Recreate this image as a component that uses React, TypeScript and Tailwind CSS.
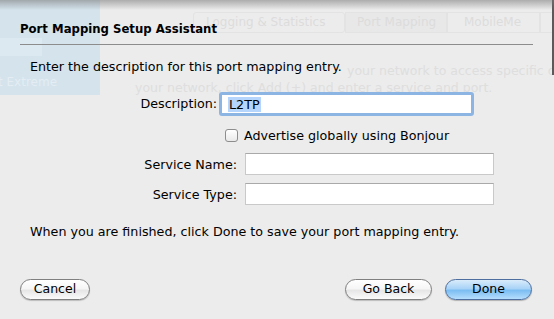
const font = "font-['DejaVu_Sans','Liberation_Sans',sans-serif]";

function AquaButton({ label, primary, width }: { label: string; primary?: boolean; width: string }) {
  return (
    <button
      className={`${width} h-[21px] rounded-full border text-[12.5px] leading-none text-black ${
        primary
          ? "border-[#4d6e9e] bg-[linear-gradient(to_bottom,#d9ecfb_0%,#a9d3f7_45%,#7cbdf2_55%,#b5defd_100%)] shadow-[0_1px_1px_rgba(0,0,0,0.25)]"
          : "border-[#7f7f7f] bg-[linear-gradient(to_bottom,#ffffff_0%,#f6f6f6_45%,#e6e6e6_55%,#fbfbfb_100%)] shadow-[0_1px_1px_rgba(0,0,0,0.2)]"
      }`}
    >
      {label}
    </button>
  );
}

function TextField() {
  return <div className="w-[249px] h-[22px] bg-white border border-[#c9c9c9] border-t-[#a9a9a9]" />;
}

export default function App() {
  return (
    <div className={`relative w-[554px] h-[319px] overflow-hidden bg-[#ececec] text-black ${font}`}>
      {/* ── Window content behind the sheet (faded) ── */}
      <div className="flex h-full">
        <div className="shrink-0 w-[100px] h-[95px] bg-[#d4e3ec] flex flex-col overflow-hidden">
          <div className="mt-[38px] w-[42px] h-[18px] bg-[#dde9f0]" />
          <div className="mt-[17px] -ml-[2px] text-[12px] text-[#e3edf3] whitespace-nowrap">t Extreme</div>
        </div>
        <div className="flex-1 min-w-0 overflow-hidden flex flex-col">
          <div className="mt-[12px] ml-[93px] flex h-[21px] text-[12px] text-[#dcdcdc] whitespace-nowrap">
            <div className="shrink-0 w-[152px] border border-[#e3e3e3] rounded-[3px] pl-[12px] leading-[19px]">Logging &amp; Statistics</div>
            <div className="shrink-0 w-[102px] border border-[#e3e3e3] pl-[11px] leading-[19px] bg-[#e8e8e8]">Port Mapping</div>
            <div className="shrink-0 w-[93px] border border-[#e3e3e3] pl-[16px] leading-[19px]">MobileMe</div>
            <div className="shrink-0 border border-[#e3e3e3] pl-[12px] leading-[19px] w-[30px]">I</div>
          </div>
          <div className="mt-[29px] text-[12.5px] leading-[17px] text-[#dedede] whitespace-nowrap">
            <div className="ml-[247px]">your network to access specific devices</div>
            <div className="ml-[35px]">your network, click Add (+) and enter a service and port.</div>
          </div>
        </div>
        <div className="shrink-0 w-[2px] h-[75px] bg-[#5a5a5a]" />
      </div>
      <div className="absolute inset-x-0 top-0 h-[10px] bg-[linear-gradient(to_bottom,rgba(120,120,120,0.55),rgba(236,236,236,0))]" />

      {/* ── Sheet ── */}
      <div className="absolute inset-0 flex flex-col px-[20px] text-[12.7px]">
        <div className="pt-[21px] text-[11.7px] font-bold leading-[16px]">Port Mapping Setup Assistant</div>
        <div className="mt-[7px] h-px w-[513px] bg-[#8c8c8c]" />
        <div className="mt-[14px] pl-[10px] leading-[16px]">Enter the description for this port mapping entry.</div>

        <div className="mt-[17px] flex items-center">
          <div className="w-[197px] text-right">Description:</div>
          <div className="ml-[2px] w-[255px] h-[24px] rounded-[3px] border-[3px] border-[#8cb5e4] bg-white p-[2px] pl-[6px] flex items-center">
            <span className="bg-[#b5d5fc] leading-[15px] px-px">L2TP</span>
          </div>
        </div>

        <div className="mt-[10px] flex items-center ml-[205px]">
          <div className="w-[13px] h-[13px] rounded-[3px] border border-[#8d8d8d] bg-[linear-gradient(to_bottom,#ffffff,#e9e9e9)]" />
          <span className="ml-[6px]">Advertise globally using Bonjour</span>
        </div>

        <div className="mt-[8px] flex items-center">
          <div className="w-[217px] text-right">Service Name:</div>
          <div className="ml-[8px]">
            <TextField />
          </div>
        </div>
        <div className="mt-[8px] flex items-center">
          <div className="w-[217px] text-right">Service Type:</div>
          <div className="ml-[8px]">
            <TextField />
          </div>
        </div>

        <div className="mt-[19px] pl-[10px] leading-[16px]">
          When you are finished, click Done to save your port mapping entry.
        </div>

        <div className="mt-[39px] flex items-center">
          <AquaButton label="Cancel" width="w-[70px]" />
          <div className="flex-1" />
          <AquaButton label="Go Back" width="w-[87px]" />
          <div className="w-[13px]" />
          <AquaButton label="Done" primary width="w-[87px]" />
          <div className="w-[2px]" />
        </div>
      </div>
    </div>
  );
}
